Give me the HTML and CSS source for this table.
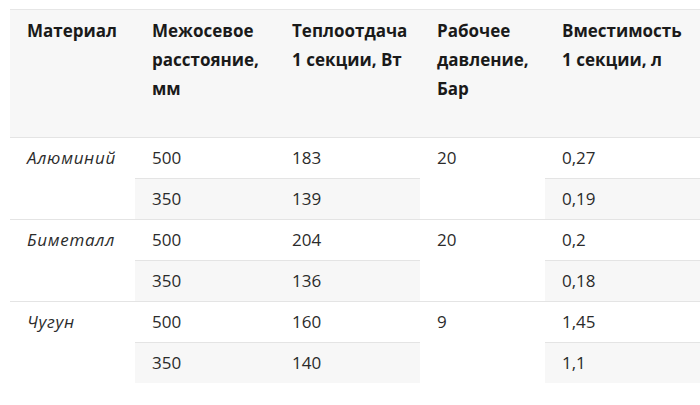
FILE: index.html
```html
<!DOCTYPE html>
<html lang="ru">
<head>
<meta charset="utf-8">
<link rel="stylesheet" href="styles.css">
</head>
<body>
<table class="spec">
  <colgroup>
    <col class="c1"><col class="c2"><col class="c3"><col class="c4"><col class="c5">
  </colgroup>
  <thead>
    <tr>
      <th>Материал</th>
      <th>Межосевое расстояние, мм</th>
      <th>Теплоотдача 1 секции, Вт</th>
      <th>Рабочее давление, Бар</th>
      <th>Вместимость 1 секции, л</th>
    </tr>
  </thead>
  <tbody>
    <tr>
      <td class="mat" rowspan="2">Алюминий</td>
      <td>500</td><td>183</td><td class="span" rowspan="2">20</td><td>0,27</td>
    </tr>
    <tr class="sub">
      <td>350</td><td>139</td><td>0,19</td>
    </tr>
    <tr>
      <td class="mat" rowspan="2">Биметалл</td>
      <td>500</td><td>204</td><td class="span" rowspan="2">20</td><td>0,2</td>
    </tr>
    <tr class="sub">
      <td>350</td><td>136</td><td>0,18</td>
    </tr>
    <tr>
      <td class="mat" rowspan="2">Чугун</td>
      <td>500</td><td>160</td><td class="span" rowspan="2">9</td><td>1,45</td>
    </tr>
    <tr class="sub">
      <td>350</td><td>140</td><td>1,1</td>
    </tr>
  </tbody>
</table>
</body>
</html>
```
FILE: styles.css
```css
html, body {
  margin: 0;
  padding: 0;
  background: #ffffff;
}
body {
  font-family: "Open Sans", "Noto Sans", sans-serif;
  color: #333333;
}
.spec {
  margin: 9px 0 0 10px;
  width: 690px;
  border-collapse: collapse;
  table-layout: fixed;
  border-top: 1px solid #e6e6e6;
}
.c1 { width: 125px; }
.c2 { width: 140px; }
.c3 { width: 145px; }
.c4 { width: 125px; }
.c5 { width: 155px; }
.spec th {
  background: #f7f7f7;
  text-align: left;
  vertical-align: top;
  font-weight: 700;
  font-size: 17px;
  line-height: 29px;
  color: #1a1a1a;
  padding: 6px 10px 34px 17px;
}
.spec td {
  text-align: left;
  vertical-align: top;
  font-size: 17px;
  line-height: 28px;
  padding: 6px 10px 6px 17px;
  border-top: 1px solid #e4e4e4;
  color: #2b2b2b;
}
.spec .sub td {
  background: #f7f7f7;
}
.spec td.mat {
  font-style: italic;
  letter-spacing: 0.7px;
}
```
